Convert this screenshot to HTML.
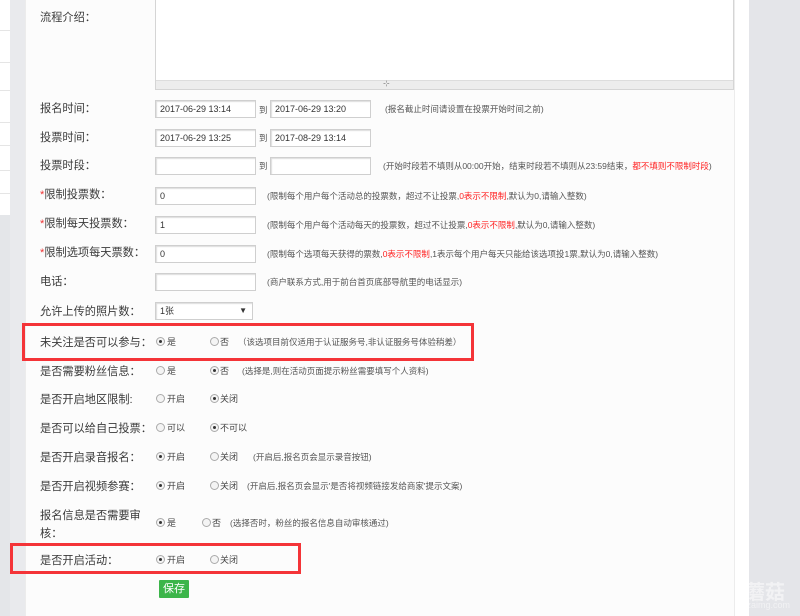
<!DOCTYPE html>
<html><head><meta charset="utf-8"><style>
*{margin:0;padding:0;box-sizing:border-box}
body{width:800px;height:616px;position:relative;overflow:hidden;background:#fff;font-family:"Liberation Sans","Noto Sans CJK SC",sans-serif;color:#333}
.a{position:absolute;white-space:nowrap}
.lbl{font-size:11.2px;color:#3a3a3a;line-height:16px}
.star{color:#e33}
.inp{position:absolute;height:18px;border:1px solid #cfcfcf;box-shadow:inset 1px 1px 1px #ddd;background:#fff;font-size:9px;line-height:16px;padding-left:4px;color:#333}
.h{font-size:8.5px;color:#555;line-height:12px}
.r{color:#f22}
.rd{position:absolute;width:9px;height:9px;border:1px solid #aaa;border-radius:50%;background:#f4f4f4}
.rd.on::after{content:"";position:absolute;left:2px;top:2px;width:3px;height:3px;border-radius:50%;background:#333}
.rt{font-size:9px;color:#444;line-height:12px}
.box{position:absolute;border:3px solid #f43438}
</style></head><body>
<div class="a" style="left:0;top:0;width:10px;height:215px;background:#fff"></div>
<div class="a" style="left:0;top:215px;width:10px;height:401px;background:#e4e6e9"></div>
<div class="a" style="left:10px;top:0;width:15px;height:616px;background:#e9eaed"></div>
<div class="a" style="left:0;top:30px;width:10px;height:1px;background:#e5e5e5"></div>
<div class="a" style="left:0;top:62px;width:10px;height:1px;background:#e5e5e5"></div>
<div class="a" style="left:0;top:90px;width:10px;height:1px;background:#e5e5e5"></div>
<div class="a" style="left:0;top:122px;width:10px;height:1px;background:#e5e5e5"></div>
<div class="a" style="left:0;top:145px;width:10px;height:1px;background:#e5e5e5"></div>
<div class="a" style="left:0;top:170px;width:10px;height:1px;background:#e5e5e5"></div>
<div class="a" style="left:0;top:193px;width:10px;height:1px;background:#e5e5e5"></div>
<div class="a" style="left:25px;top:0;width:710px;height:616px;background:#fcfcfc;border-left:1px solid #ececec;border-right:1px solid #ececec"></div>
<div class="a" style="left:749px;top:0;width:51px;height:616px;background:#e4e5e9"></div>

<div class="a lbl" style="left:40px;top:10px">流程介绍：</div>
<div class="a" style="left:155px;top:0;width:579px;height:90px;background:#fff;border:1px solid #d5d5d5;border-top:none"></div>
<div class="a" style="left:156px;top:80px;width:577px;height:9px;background:#ededed;border-top:1px solid #ddd"></div>
<div class="a" style="left:383px;top:79px;font-size:8px;color:#888">⊹</div>

<div class="a lbl" style="left:40px;top:101px">报名时间：</div>
<div class="inp" style="left:155px;top:100px;width:101px">2017-06-29 13:14</div>
<div class="a h" style="left:259px;top:104px">到</div>
<div class="inp" style="left:270px;top:100px;width:101px">2017-06-29 13:20</div>
<div class="a h" style="left:385px;top:103px">(报名截止时间请设置在投票开始时间之前)</div>

<div class="a lbl" style="left:40px;top:130px">投票时间：</div>
<div class="inp" style="left:155px;top:129px;width:101px">2017-06-29 13:25</div>
<div class="a h" style="left:259px;top:132px">到</div>
<div class="inp" style="left:270px;top:129px;width:101px">2017-08-29 13:14</div>

<div class="a lbl" style="left:40px;top:158px">投票时段：</div>
<div class="inp" style="left:155px;top:157px;width:101px"></div>
<div class="a h" style="left:259px;top:160px">到</div>
<div class="inp" style="left:270px;top:157px;width:101px"></div>
<div class="a h" style="left:383px;top:160px">(开始时段若不填则从00:00开始，结束时段若不填则从23:59结束，<span class="r">都不填则不限制时段</span>)</div>

<div class="a lbl" style="left:40px;top:187px"><span class="star">*</span>限制投票数：</div>
<div class="inp" style="left:155px;top:187px;width:101px">0</div>
<div class="a h" style="left:267px;top:190px">(限制每个用户每个活动总的投票数，超过不让投票,<span class="r">0表示不限制</span>,默认为0,请输入整数)</div>

<div class="a lbl" style="left:40px;top:216px"><span class="star">*</span>限制每天投票数：</div>
<div class="inp" style="left:155px;top:216px;width:101px">1</div>
<div class="a h" style="left:267px;top:219px">(限制每个用户每个活动每天的投票数，超过不让投票,<span class="r">0表示不限制</span>,默认为0,请输入整数)</div>

<div class="a lbl" style="left:40px;top:245px"><span class="star">*</span>限制选项每天票数：</div>
<div class="inp" style="left:155px;top:245px;width:101px">0</div>
<div class="a h" style="left:267px;top:248px">(限制每个选项每天获得的票数,<span class="r">0表示不限制</span>,1表示每个用户每天只能给该选项投1票,默认为0,请输入整数)</div>

<div class="a lbl" style="left:40px;top:274px">电话：</div>
<div class="inp" style="left:155px;top:273px;width:101px"></div>
<div class="a h" style="left:267px;top:276px">(商户联系方式,用于前台首页底部导航里的电话显示)</div>

<div class="a lbl" style="left:40px;top:304px">允许上传的照片数：</div>
<div class="inp" style="left:155px;top:302px;width:98px">1张<span style="position:absolute;right:5px;top:0;font-size:8px">▼</span></div>

<div class="box" style="left:22px;top:323px;width:452px;height:38px"></div>
<div class="a lbl" style="left:40px;top:335px">未关注是否可以参与：</div>
<div class="rd on" style="left:156px;top:337px"></div><div class="a rt" style="left:167px;top:336px">是</div>
<div class="rd" style="left:210px;top:337px"></div><div class="a rt" style="left:220px;top:336px">否</div>
<div class="a h" style="left:238px;top:336px">（该选项目前仅适用于认证服务号,非认证服务号体验稍差）</div>

<div class="a lbl" style="left:40px;top:364px">是否需要粉丝信息：</div>
<div class="rd" style="left:156px;top:366px"></div><div class="a rt" style="left:167px;top:365px">是</div>
<div class="rd on" style="left:210px;top:366px"></div><div class="a rt" style="left:220px;top:365px">否</div>
<div class="a h" style="left:242px;top:365px">(选择是,则在活动页面提示粉丝需要填写个人资料)</div>

<div class="a lbl" style="left:40px;top:392px">是否开启地区限制:</div>
<div class="rd" style="left:156px;top:394px"></div><div class="a rt" style="left:167px;top:393px">开启</div>
<div class="rd on" style="left:210px;top:394px"></div><div class="a rt" style="left:220px;top:393px">关闭</div>

<div class="a lbl" style="left:40px;top:421px">是否可以给自己投票：</div>
<div class="rd" style="left:156px;top:423px"></div><div class="a rt" style="left:167px;top:422px">可以</div>
<div class="rd on" style="left:210px;top:423px"></div><div class="a rt" style="left:220px;top:422px">不可以</div>

<div class="a lbl" style="left:40px;top:450px">是否开启录音报名：</div>
<div class="rd on" style="left:156px;top:452px"></div><div class="a rt" style="left:167px;top:451px">开启</div>
<div class="rd" style="left:210px;top:452px"></div><div class="a rt" style="left:220px;top:451px">关闭</div>
<div class="a h" style="left:253px;top:451px">(开启后,报名页会显示录音按钮)</div>

<div class="a lbl" style="left:40px;top:479px">是否开启视频参赛：</div>
<div class="rd on" style="left:156px;top:481px"></div><div class="a rt" style="left:167px;top:480px">开启</div>
<div class="rd" style="left:210px;top:481px"></div><div class="a rt" style="left:220px;top:480px">关闭</div>
<div class="a h" style="left:247px;top:480px">(开启后,报名页会显示'是否将视频链接发给商家'提示文案)</div>

<div class="a lbl" style="left:40px;top:507px;line-height:18px">报名信息是否需要审<br>核：</div>
<div class="rd on" style="left:156px;top:518px"></div><div class="a rt" style="left:167px;top:517px">是</div>
<div class="rd" style="left:202px;top:518px"></div><div class="a rt" style="left:212px;top:517px">否</div>
<div class="a h" style="left:230px;top:517px">(选择否时，粉丝的报名信息自动审核通过)</div>

<div class="box" style="left:10px;top:543px;width:291px;height:31px"></div>
<div class="a lbl" style="left:40px;top:553px">是否开启活动：</div>
<div class="rd on" style="left:156px;top:555px"></div><div class="a rt" style="left:167px;top:554px">开启</div>
<div class="rd" style="left:210px;top:555px"></div><div class="a rt" style="left:220px;top:554px">关闭</div>

<div class="a" style="left:159px;top:580px;width:30px;height:18px;background:#3cb54a;color:#fff;font-size:11px;line-height:18px;text-align:center;border-radius:1px">保存</div>

<div class="a" style="left:745px;top:576px;font-size:20px;color:rgba(255,255,255,0.5);font-weight:bold">蘑菇</div>
<div class="a" style="left:735px;top:600px;font-size:9px;color:rgba(255,255,255,0.5)">xiazaimg.com</div>
</body></html>
